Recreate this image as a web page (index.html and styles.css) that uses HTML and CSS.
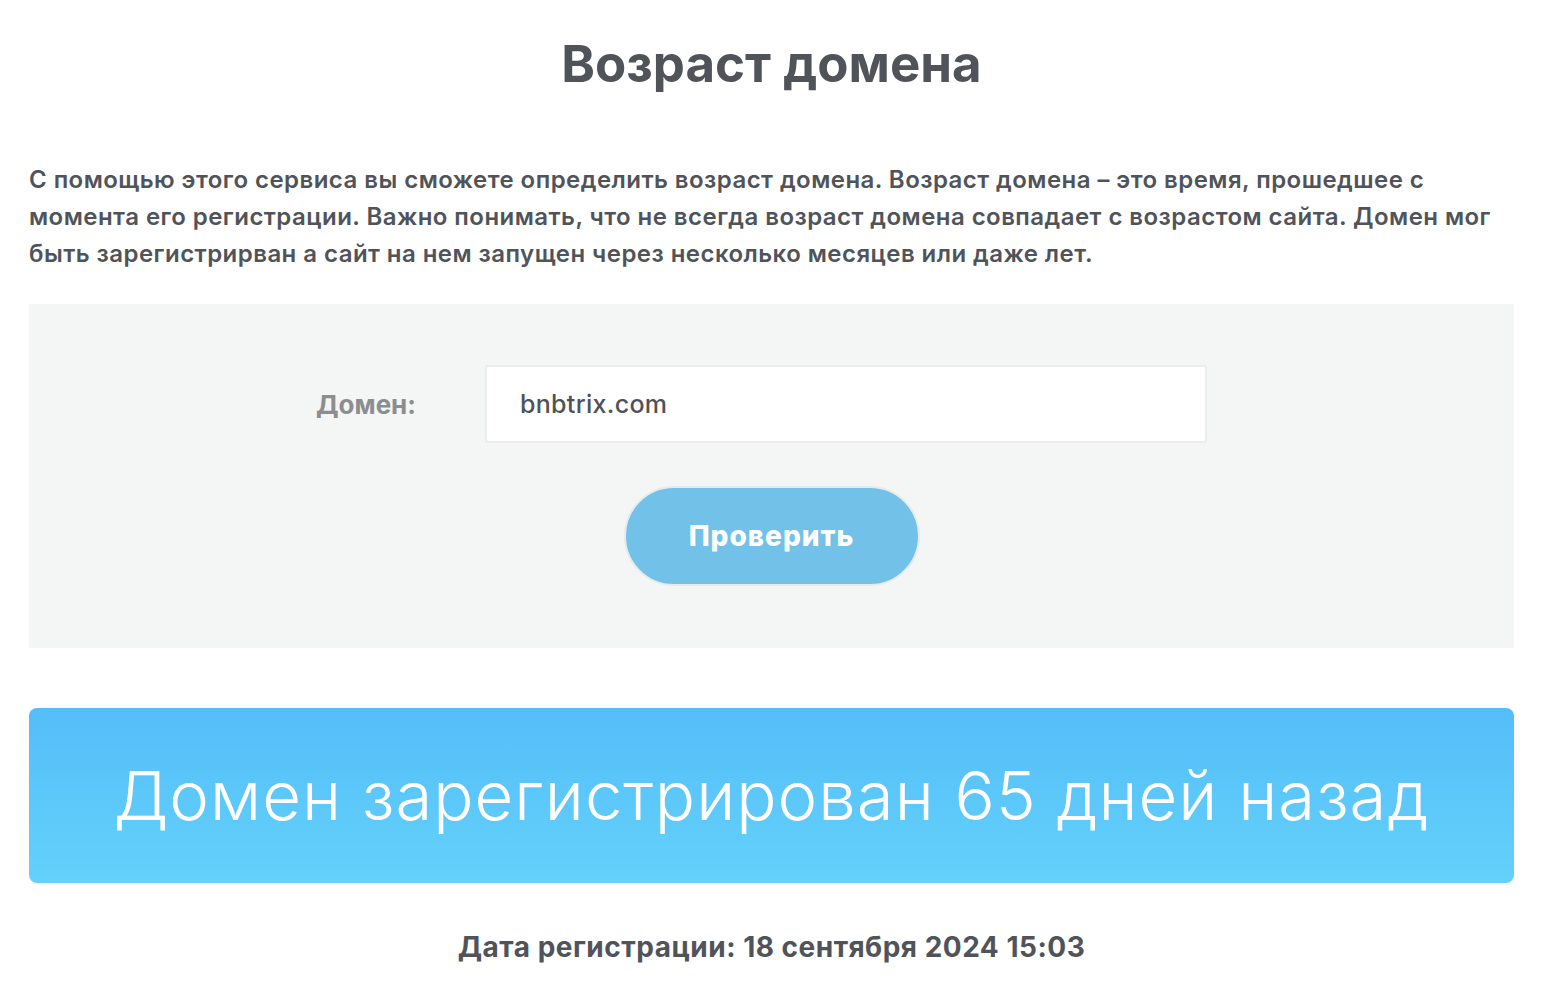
FILE: index.html
```html
<!DOCTYPE html>
<html lang="ru">
<head>
<meta charset="utf-8">
<title>Возраст домена</title>
<link rel="stylesheet" href="styles.css">
</head>
<body>
<main class="page">
  <h1 class="title">Возраст домена</h1>
  <p class="intro">С помощью этого сервиса вы сможете определить возраст домена. Возраст домена – это время, прошедшее с момента его регистрации. Важно понимать, что не всегда возраст домена совпадает с возрастом сайта. Домен мог быть зарегистрирван а сайт на нем запущен через несколько месяцев или даже лет.</p>
  <section class="form-box">
    <div class="form-row">
      <label class="form-label" for="domain">Домен:</label>
      <input class="form-input" id="domain" type="text" value="bnbtrix.com">
    </div>
    <div class="form-actions">
      <button class="btn" type="button">Проверить</button>
    </div>
  </section>
  <section class="result">
    <div class="result-text">Домен зарегистрирован 65 дней назад</div>
  </section>
  <p class="reg-date">Дата регистрации: 18 сентября 2024 15:03</p>
</main>
</body>
</html>
```
FILE: styles.css
```css
html, body {
  margin: 0;
  padding: 0;
  background: #ffffff;
}
body {
  font-family: Inter, "Noto Sans", sans-serif;
  color: #50545a;
}
.page {
  padding: 0 30px 0 29px;
}
.title {
  margin: 0;
  padding-top: 36px;
  font-size: 51px;
  line-height: 56px;
  font-weight: 700;
  text-align: center;
  color: #50545a;
}
.intro {
  margin: 69px 0 0;
  font-size: 24px;
  line-height: 37px;
  font-weight: 600;
  letter-spacing: 0.45px;
  color: #50545a;
}
.form-box {
  margin-top: 32px;
  background: #f4f5f5;
  padding: 61px 0 62px;
}
.form-row {
  display: flex;
  align-items: center;
  gap: 69px;
  padding-left: 287px;
}
.form-label {
  font-size: 26px;
  font-weight: 700;
  color: #8c8d8e;
  width: 100px;
  text-align: right;
  white-space: nowrap;
}
.form-input {
  flex: 0 0 auto;
  width: 722px;
  height: 78px;
  box-sizing: border-box;
  border: 2px solid #ececec;
  border-radius: 3px;
  background: #ffffff;
  padding: 0 33px;
  font-family: Inter, "Noto Sans", sans-serif;
  font-size: 25px;
  font-weight: 500;
  letter-spacing: 0.3px;
  color: #4f5358;
  outline: none;
}
.form-actions {
  display: flex;
  justify-content: center;
  margin-top: 43px;
}
.btn {
  width: 296px;
  height: 100px;
  border-radius: 50px;
  border: 2px solid #e6eaec;
  background: #71c1e8;
  color: #ffffff;
  font-family: Inter, "Noto Sans", sans-serif;
  font-size: 28px;
  font-weight: 800;
  letter-spacing: 1px;
  cursor: pointer;
}
.result {
  margin-top: 60px;
  height: 175px;
  border-radius: 8px;
  background: linear-gradient(to bottom, #55bdf9, #63d1fa);
  display: flex;
  align-items: center;
  justify-content: center;
}
.result-text {
  color: #ffffff;
  font-size: 67px;
  font-weight: 300;
  letter-spacing: 1px;
  line-height: 1;
}
.reg-date {
  margin: 47px 0 0;
  text-align: center;
  font-size: 28px;
  font-weight: 700;
  letter-spacing: 0.5px;
  color: #50545a;
}
```
